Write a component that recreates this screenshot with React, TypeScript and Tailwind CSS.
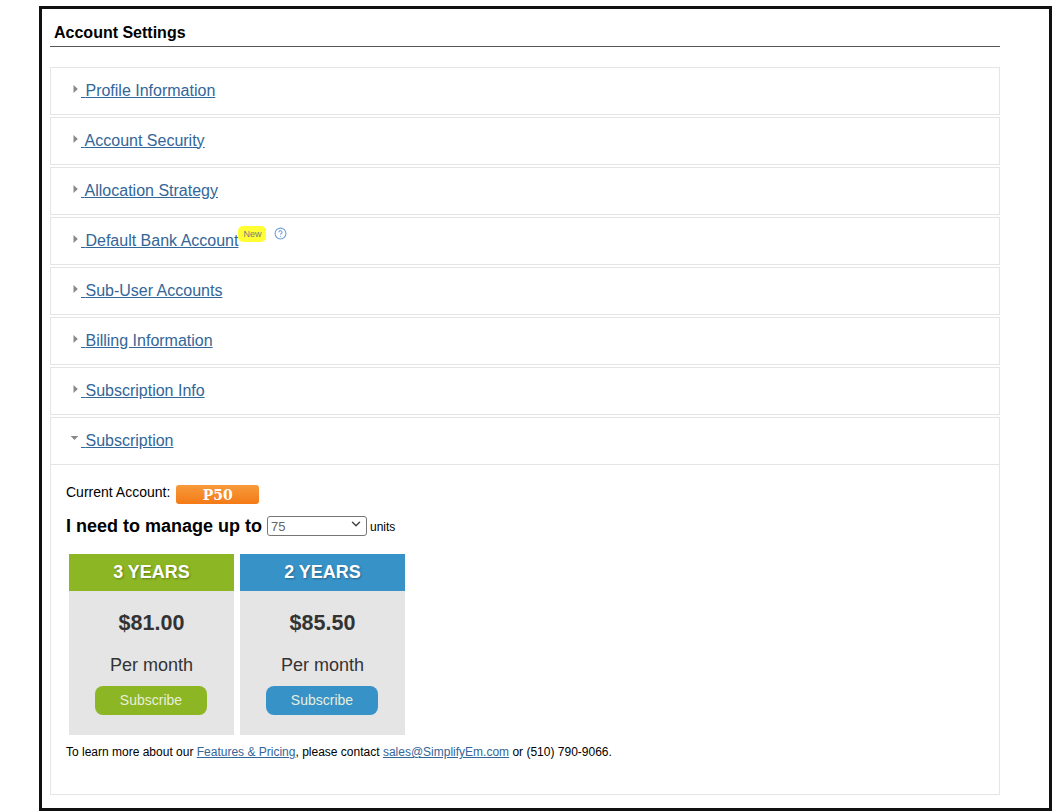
import { ChevronDown, CircleHelp } from 'lucide-react';

const collapsed = [
  'Profile Information',
  'Account Security',
  'Allocation Strategy',
  'Default Bank Account',
  'Sub-User Accounts',
  'Billing Information',
  'Subscription Info',
];

const plans = [
  { label: '3 YEARS', price: '$81.00', head: 'bg-[#8cb623]' },
  { label: '2 YEARS', price: '$85.50', head: 'bg-[#3792c8]' },
];

function Arrow({ open }: { open?: boolean }) {
  return (
    <svg width="10" height="10" viewBox="0 0 10 10" className="shrink-0 mt-[-3px] ml-[19px] mr-[1px]">
      {open ? <path d="M0.7 2 L8.3 2 L4.5 6 Z" fill="#888888" /> : <path d="M3.5 1 L7.8 5 L3.5 9 Z" fill="#888888" />}
    </svg>
  );
}

function Title({ text, open }: { text: string; open?: boolean }) {
  return (
    <div className="flex items-center h-[45px]">
      <Arrow open={open} />
      <a href="#" className="text-[16px] leading-[20px] text-[#336699] underline whitespace-pre">
        {' '}{text}
      </a>
      {text === 'Default Bank Account' && (
        <>
          <span className="self-start mt-[8px] h-[16px] w-[28px] rounded-[5px] bg-[#ffff33] text-[9px] leading-[16px] text-center text-[#777777]">
            New
          </span>
          <CircleHelp size={13} strokeWidth={2} className="self-start mt-[9px] ml-[8px] text-[#6f9fd8]" />
        </>
      )}
    </div>
  );
}

export default function App() {
  return (
    <div className="w-[1052px] h-[812px] pl-[39px] pt-[6px] pb-[1px] bg-white font-['Liberation_Sans',Arial,sans-serif] text-black overflow-hidden">
      <div className="h-full border-[3px] border-[#111111] pl-[8px] pr-[49px]">
        <h2 className="h-[38px] pl-[4px] pt-[15px] text-[16px] leading-[18px] font-bold border-b border-[#555555]">
          Account Settings
        </h2>
        <div className="mt-[20px] flex flex-col gap-[2px]">
          {collapsed.map((t) => (
            <div key={t} className="h-[48px] border border-[#e5e5e5] bg-white">
              <Title text={t} />
            </div>
          ))}
          <div className="h-[378px] border border-[#e5e5e5] bg-white">
            <div className="border-b border-[#e5e5e5] h-[47px]">
              <Title text="Subscription" open />
            </div>
            <div className="pl-[15px]">
              <div className="flex items-center mt-[19px] h-[20px]">
                <span className="text-[14px] leading-[16px] mt-[-4px]">Current Account:</span>
                <span className="ml-[6px] w-[83px] h-[19px] rounded-[3px] bg-gradient-to-b from-[#f79a3a] to-[#f47a14] text-center text-white text-[14px] leading-[20px] font-bold font-['DejaVu_Serif',serif]">
                  P50
                </span>
              </div>
              <div className="flex items-center mt-[10px] h-[22px]">
                <span className="text-[18px] leading-[22px] font-bold mt-[2px]">I need to manage up to</span>
                <div className="relative ml-[5px] mt-[-3px] w-[100px] h-[20px]">
                  <select
                    defaultValue="75"
                    className="appearance-none w-full h-full pl-[3px] border border-[#767676] rounded-[3px] text-[13px] text-[#666666]"
                  >
                    <option>50</option>
                    <option>75</option>
                    <option>100</option>
                  </select>
                  <ChevronDown size={14} strokeWidth={2.5} className="absolute right-[4px] top-[3px] text-[#444444] pointer-events-none" />
                </div>
                <span className="ml-[3px] text-[12px] leading-[14px] mt-[3px]">units</span>
              </div>
              <div className="flex gap-[6px] mt-[18px] ml-[3px]">
                {plans.map((p) => (
                  <div key={p.label} className="w-[165px] h-[181px] bg-[#e5e5e5] flex flex-col items-center">
                    <div className={`${p.head} w-full h-[37px] text-center text-white text-[18px] leading-[37px] font-bold [text-shadow:1px_1px_2px_rgba(0,0,0,0.3)]`}>
                      {p.label}
                    </div>
                    <div className="mt-[19px] text-[21.5px] leading-[26px] font-bold text-[#333333]">{p.price}</div>
                    <div className="mt-[18px] text-[18px] leading-[22px] text-[#333333]">Per month</div>
                    <button className={`${p.head} mt-[10px] mr-[1px] w-[112px] h-[29px] rounded-[8px] text-[14px] text-[#e8eedd]`}>
                      Subscribe
                    </button>
                  </div>
                ))}
              </div>
              <p className="mt-[9px] text-[12px] leading-[16px]">
                To learn more about our <a href="#" className="text-[#336699] underline">Features &amp; Pricing</a>, please contact{' '}
                <a href="#" className="text-[#336699] underline">sales@SimplifyEm.com</a> or (510) 790-9066.
              </p>
            </div>
          </div>
        </div>
      </div>
    </div>
  );
}
